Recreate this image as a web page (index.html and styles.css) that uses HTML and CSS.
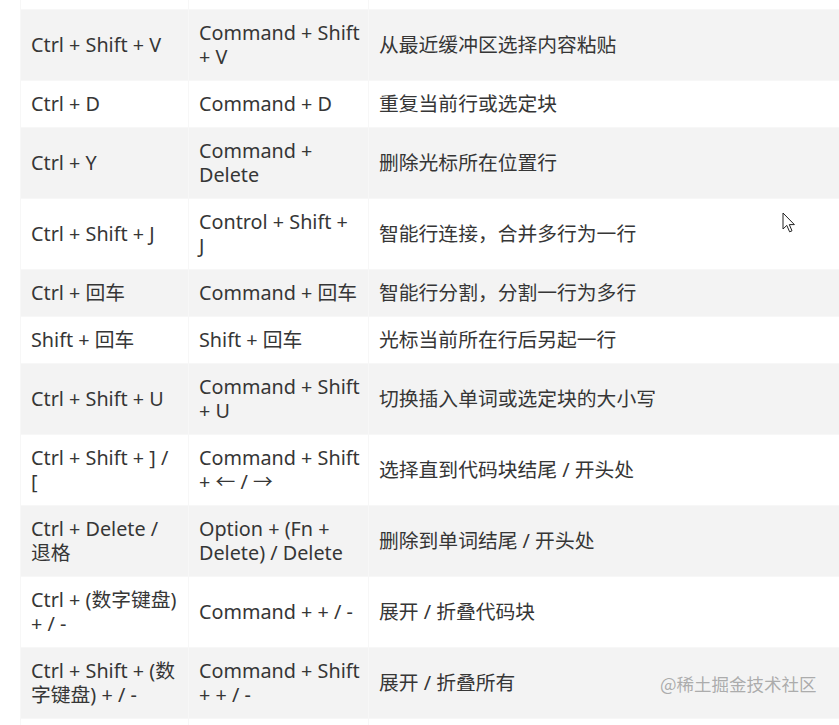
FILE: index.html
```html
<!DOCTYPE html>
<html lang="zh-CN">
<head>
<meta charset="utf-8">
<title>快捷键</title>
<link rel="stylesheet" href="styles.css">
</head>
<body>
<div class="page">
<table class="keys">
<tbody>
<tr><td>Ctrl + Shift + C</td><td>Command + C</td><td>复制</td></tr>
<tr><td>Ctrl + Shift + V</td><td>Command + Shift<br>+ V</td><td>从最近缓冲区选择内容粘贴</td></tr>
<tr><td>Ctrl + D</td><td>Command + D</td><td>重复当前行或选定块</td></tr>
<tr><td>Ctrl + Y</td><td>Command +<br>Delete</td><td>删除光标所在位置行</td></tr>
<tr><td>Ctrl + Shift + J</td><td>Control + Shift +<br>J</td><td>智能行连接，合并多行为一行</td></tr>
<tr><td>Ctrl + 回车</td><td>Command + 回车</td><td>智能行分割，分割一行为多行</td></tr>
<tr><td>Shift + 回车</td><td>Shift + 回车</td><td>光标当前所在行后另起一行</td></tr>
<tr><td>Ctrl + Shift + U</td><td>Command + Shift<br>+ U</td><td>切换插入单词或选定块的大小写</td></tr>
<tr><td>Ctrl + Shift + ] /<br>[</td><td>Command + Shift<br>+ ← / →</td><td>选择直到代码块结尾 / 开头处</td></tr>
<tr><td>Ctrl + Delete /<br>退格</td><td>Option + (Fn +<br>Delete) / Delete</td><td>删除到单词结尾 / 开头处</td></tr>
<tr><td>Ctrl + (数字键盘)<br>+ / -</td><td>Command + + / -</td><td>展开 / 折叠代码块</td></tr>
<tr><td>Ctrl + Shift + (数<br>字键盘) + / -</td><td>Command + Shift<br>+ + / -</td><td>展开 / 折叠所有</td></tr>
<tr><td>Ctrl + W</td><td>Option + 上</td><td>扩展选择</td></tr>
</tbody>
</table>
<div class="watermark">@稀土掘金技术社区</div>
<svg class="cursor" width="14" height="22" viewBox="0 0 14 22" aria-hidden="true">
<path d="M1 1 L1 17 L4.8 13.4 L7.6 19.8 L10 18.8 L7.3 12.6 L12.4 12.6 Z" fill="#fff" stroke="#222" stroke-width="1" stroke-linejoin="round"/>
</svg>
</div>
</body>
</html>
```

FILE: styles.css
```css
html, body {
  margin: 0;
  padding: 0;
  background: #ffffff;
  overflow: hidden;
}
.page {
  position: relative;
  width: 839px;
  height: 725px;
  overflow: hidden;
  padding-left: 20px;
  box-sizing: border-box;
}
.keys {
  border-collapse: collapse;
  width: 920px;
  margin-top: -38px;
  font-family: "Noto Sans", "Noto Sans CJK SC", sans-serif;
  font-size: 19.8px;
  line-height: 24px;
  color: #363636;
  table-layout: fixed;
}
.keys td {
  padding: 11px 10px;
  border: 1px solid #f7f7f7;
  vertical-align: middle;
  white-space: nowrap;
}
.keys td:nth-child(1) { width: 147px; }
.keys td:nth-child(2) { width: 159px; }
.keys tr:nth-child(even) td { background: #f3f3f3; }
.keys tr:nth-child(odd) td { background: #ffffff; }
.watermark {
  position: absolute;
  left: 660px;
  top: 672px;
  font-family: "Noto Sans CJK SC", sans-serif;
  font-size: 17.5px;
  line-height: 24px;
  color: rgba(140, 140, 140, 0.7);
}
.cursor {
  position: absolute;
  left: 782px;
  top: 212px;
}
```
